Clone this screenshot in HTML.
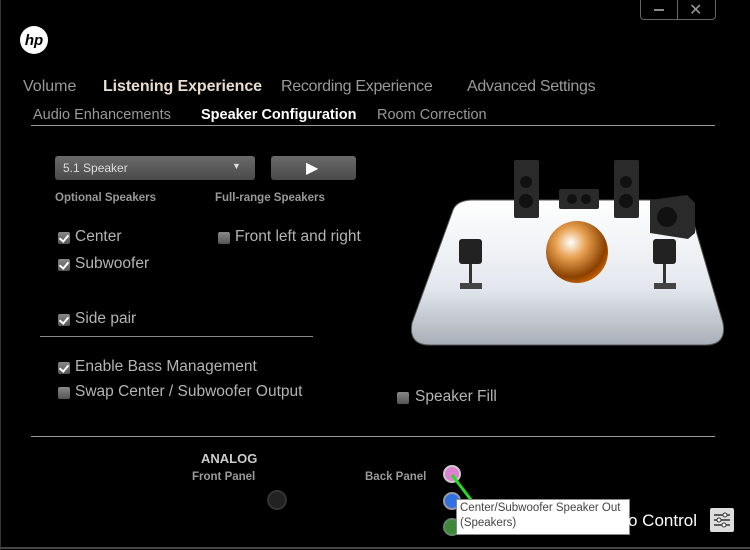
<!DOCTYPE html><html><head><style>
body{margin:0;width:750px;height:550px;background:#000;overflow:hidden;position:relative;font-family:"Liberation Sans",sans-serif;color:#b4b4b4}
.a{position:absolute;white-space:nowrap}
.cb{position:absolute;width:12px;height:12px;background:linear-gradient(#888,#555);border-radius:2px}
.cb.on::after{content:"";position:absolute;left:3px;top:1px;width:4px;height:7px;border:solid #fff;border-width:0 2px 2px 0;transform:rotate(40deg)}
.lbl{font-size:15.5px}
.b{font-weight:bold}
</style></head><body>
<div class="a" style="left:0;top:0;width:1px;height:550px;background:#333"></div>
<div class="a" style="left:0;top:547px;width:750px;height:2px;background:#444"></div>
<div class="a" style="left:640px;top:-2px;width:74px;height:20px;border:1px solid #666;border-radius:0 0 4px 4px"></div>
<div class="a" style="left:677px;top:0;width:1px;height:19px;background:#666"></div>
<div class="a" style="left:654px;top:9px;width:10px;height:2px;background:#888"></div>
<div class="a" style="left:689px;top:0px;font-size:16px;color:#999">✕</div>
<svg class="a" style="left:19px;top:25px" width="30" height="30"><circle cx="15" cy="15" r="14" fill="#fff"/><text x="15" y="20" font-size="15" font-weight="bold" font-style="italic" text-anchor="middle" fill="#000" font-family="Liberation Sans">hp</text></svg>
<div class="a" style="left:23px;top:78px;font-size:16px;color:#999">Volume</div>
<div class="a b" style="left:103px;top:78px;font-size:16px;color:#e8dcd0;letter-spacing:-0.1px">Listening Experience</div>
<div class="a" style="left:281px;top:78px;font-size:16px;color:#999;letter-spacing:-0.3px">Recording Experience</div>
<div class="a" style="left:467px;top:78px;font-size:16px;color:#999;letter-spacing:-0.3px">Advanced Settings</div>
<div class="a" style="left:33px;top:107px;font-size:14.5px;color:#999">Audio Enhancements</div>
<div class="a b" style="left:201px;top:107px;font-size:14.5px;color:#fff">Speaker Configuration</div>
<div class="a" style="left:377px;top:107px;font-size:14.5px;color:#999">Room Correction</div>
<div class="a" style="left:31px;top:125px;width:684px;height:1px;background:#999"></div>
<div class="a" style="left:55px;top:156px;width:200px;height:24px;border-radius:3px;background:linear-gradient(#6a6a6a,#4a4a4a)"></div>
<div class="a" style="left:63px;top:161px;font-size:12px;color:#ddd">5.1 Speaker</div>
<div class="a" style="left:232px;top:161px;font-size:9px;color:#ddd">▼</div>
<div class="a" style="left:271px;top:156px;width:85px;height:24px;border-radius:3px;background:linear-gradient(#6a6a6a,#4a4a4a)"></div>
<div class="a" style="left:306px;top:158px;font-size:16px;color:#fff">▶</div>
<div class="a b" style="left:55px;top:192px;font-size:11.5px;color:#999">Optional Speakers</div>
<div class="a b" style="left:215px;top:192px;font-size:11.5px;color:#999">Full-range Speakers</div>
<div class="cb on" style="left:58px;top:232px"></div><div class="a lbl" style="left:75px;top:228px">Center</div>
<div class="cb on" style="left:58px;top:259px"></div><div class="a lbl" style="left:75px;top:255px">Subwoofer</div>
<div class="cb" style="left:218px;top:232px"></div><div class="a lbl" style="left:235px;top:228px">Front left and right</div>
<div class="cb on" style="left:58px;top:314px"></div><div class="a lbl" style="left:75px;top:310px">Side pair</div>
<div class="a" style="left:40px;top:336px;width:273px;height:1px;background:#888"></div>
<div class="cb on" style="left:58px;top:362px"></div><div class="a lbl" style="left:75px;top:358px">Enable Bass Management</div>
<div class="cb" style="left:58px;top:387px"></div><div class="a lbl" style="left:75px;top:383px">Swap Center / Subwoofer Output</div>
<div class="cb" style="left:397px;top:392px"></div><div class="a lbl" style="left:415px;top:388px">Speaker Fill</div>
<svg class="a" style="left:405px;top:155px" width="325" height="195">
<defs><linearGradient id="p" x1="0" y1="0" x2="0" y2="1"><stop offset="0" stop-color="#fff"/><stop offset="0.6" stop-color="#e4e8ee"/><stop offset="1" stop-color="#a8aeb8"/></linearGradient>
<radialGradient id="s" cx="0.4" cy="0.35" r="0.7"><stop offset="0" stop-color="#fff"/><stop offset="0.35" stop-color="#e8a050"/><stop offset="0.8" stop-color="#8a4000"/><stop offset="1" stop-color="#d06800"/></radialGradient></defs>
<path d="M48 55 Q52 45 68 45 H272 Q282 45 285 55 L318 168 Q322 190 300 190 H25 Q3 190 7 168 Z" fill="url(#p)" stroke="#555"/>
<rect x="109" y="5" width="25" height="58" rx="2" fill="#2a2a2a"/><circle cx="121" cy="27" r="6" fill="#111"/><circle cx="121" cy="46" r="7" fill="#111"/>
<rect x="209" y="5" width="25" height="58" rx="2" fill="#2a2a2a"/><circle cx="221" cy="27" r="6" fill="#111"/><circle cx="221" cy="46" r="7" fill="#111"/>
<rect x="154" y="34" width="40" height="20" rx="2" fill="#2a2a2a"/><circle cx="167" cy="44" r="5" fill="#111"/><circle cx="181" cy="44" r="5" fill="#111"/>
<path d="M245 45 L282 40 L290 48 V78 L283 84 L245 78 Z" fill="#2a2a2a"/><circle cx="262" cy="62" r="10" fill="#111"/>
<rect x="54" y="84" width="23" height="25" rx="3" fill="#222"/><rect x="64" y="109" width="3" height="20" fill="#333"/><rect x="55" y="128" width="22" height="6" fill="#444"/>
<rect x="248" y="84" width="23" height="25" rx="3" fill="#222"/><rect x="258" y="109" width="3" height="20" fill="#333"/><rect x="249" y="128" width="22" height="6" fill="#444"/>
<circle cx="172" cy="97" r="31" fill="url(#s)"/>
</svg>
<div class="a" style="left:31px;top:436px;width:684px;height:1px;background:#999"></div>
<div class="a b" style="left:201px;top:451px;font-size:13px;color:#ccc">ANALOG</div>
<div class="a b" style="left:192px;top:471px;font-size:11.5px;color:#999">Front Panel</div>
<div class="a b" style="left:365px;top:471px;font-size:11.5px;color:#999">Back Panel</div>
<div class="a" style="left:267px;top:490px;width:16px;height:16px;border-radius:50%;background:#222;border:2px solid #333"></div>
<div class="a" style="left:443px;top:465px;width:14px;height:14px;border-radius:50%;background:#e080d0;border:2px solid #ccc"></div>
<div class="a" style="left:443px;top:492px;width:14px;height:14px;border-radius:50%;background:#3070e0;border:2px solid #99a"></div>
<div class="a" style="left:443px;top:518px;width:14px;height:14px;border-radius:50%;background:#3a8a3a;border:2px solid #686"></div>
<svg class="a" style="left:445px;top:468px" width="40" height="40"><line x1="7" y1="7" x2="30" y2="37" stroke="#22dd22" stroke-width="3"/></svg>
<div class="a" style="left:456px;top:499px;width:172px;height:34px;background:#fff;border:1px solid #888"></div>
<div class="a" style="left:460px;top:501px;font-size:11.5px;color:#444;line-height:15px">Center/Subwoofer Speaker Out<br>(Speakers)</div>
<div class="a" style="left:628px;top:511px;font-size:17px;color:#fff">o Control</div>
<div class="a" style="left:710px;top:508px;width:24px;height:24px;background:#ddd;border-radius:2px"></div>
<svg class="a" style="left:712px;top:510px" width="20" height="20"><g stroke="#333" stroke-width="1.5"><line x1="2" y1="5" x2="18" y2="5"/><line x1="2" y1="10" x2="18" y2="10"/><line x1="2" y1="15" x2="18" y2="15"/></g><circle cx="13" cy="5" r="2" fill="#fff" stroke="#333"/><circle cx="7" cy="10" r="2" fill="#fff" stroke="#333"/><circle cx="12" cy="15" r="2" fill="#fff" stroke="#333"/></svg>
</body></html>
